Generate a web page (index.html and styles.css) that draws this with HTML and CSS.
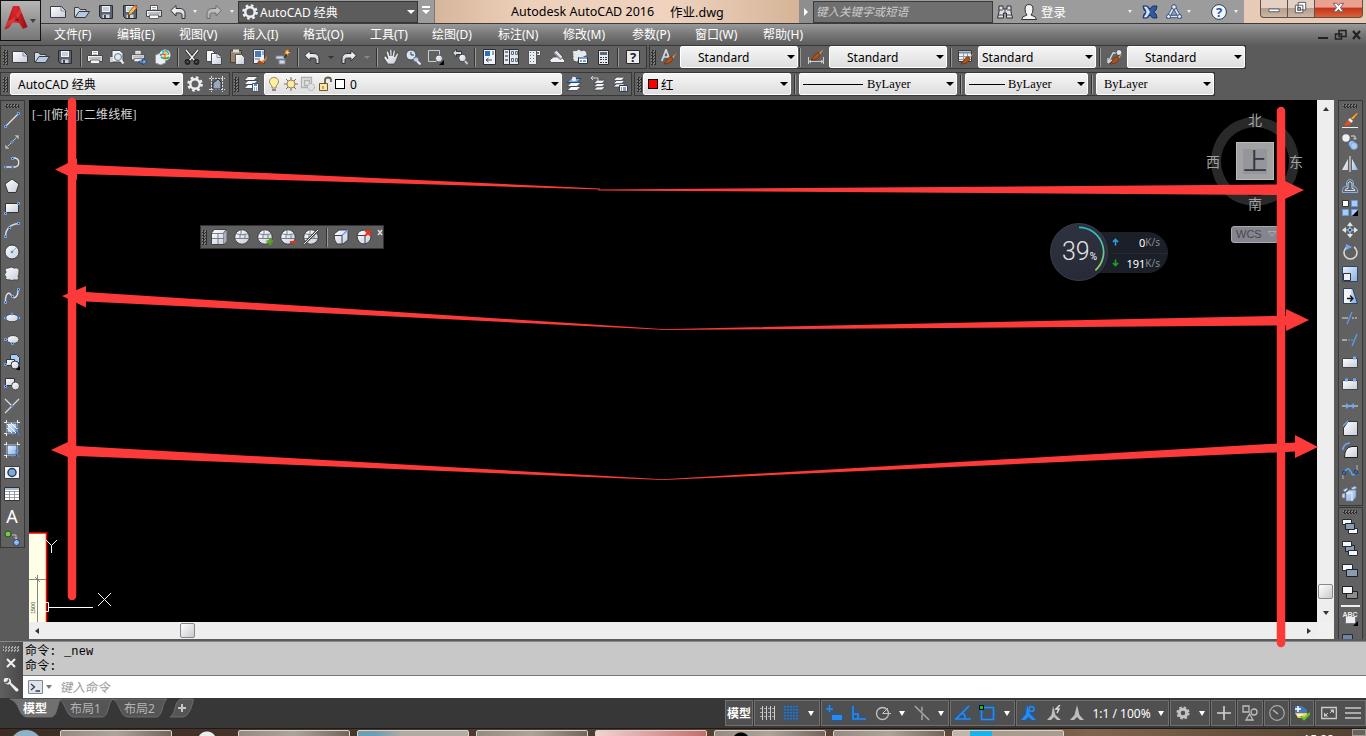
FILE: index.html
```
<!DOCTYPE html>
<html lang="zh-CN">
<head>
  <meta charset="UTF-8">
  <title>Autodesk AutoCAD 2016 - 作业.dwg</title>
  <link rel="stylesheet" href="styles.css">
</head>
<body>
  <!-- Icon set -->
  <svg class="defs" width="0" height="0">
    <defs>
      <linearGradient id="lg" x1="0" y1="0" x2="1" y2="1"><stop offset="0" stop-color="#fff"/><stop offset="1" stop-color="#c6ccd9"/></linearGradient>
      <linearGradient id="bl" x1="0" y1="0" x2="1" y2="1"><stop offset="0" stop-color="#eaf3ff"/><stop offset="1" stop-color="#87aee0"/></linearGradient>
      <linearGradient id="rd" x1="0" y1="0" x2="1" y2="0"><stop offset="0" stop-color="#a81519"/><stop offset=".5" stop-color="#dc2529"/><stop offset="1" stop-color="#8c0e12"/></linearGradient>
    </defs>
    <symbol id="new" viewBox="0 0 16 16"><path d="M.5 2.500h11l4 4v7H.5z" fill="url(#lg)" stroke="#3a3d44"/><path d="M11 3v4h4" fill="#d0d5de" stroke="#8b909a"/></symbol>
    <symbol id="open" viewBox="0 0 16 16"><path d="M.5 13V3.500h4l1.500 2h6V8" fill="#d4dae4" stroke="#3a3d44"/><path d="M1 13.500 5 7.500h10.500l-4 6z" fill="#b9c9dd" stroke="#333a45"/></symbol>
    <symbol id="save" viewBox="0 0 16 16"><path d="M1.500 1.500h13v13h-11l-2-2z" fill="#5b6270" stroke="#292c33"/><path d="M4 2h8v6H4z" fill="#eef1f5"/><path d="M5 4h6M5 6h6" stroke="#a3acb8"/><path d="M4.500 10.500h7V14h-7z" fill="#cfd5df"/><path d="M6 11h2v3H6z" fill="#444a55"/></symbol>
    <symbol id="saveas" viewBox="0 0 16 16"><use href="#save"/><path d="m6 11 1-3 6-7 2.500 2-6 7z" fill="#f3bd50" stroke="#5d4117" stroke-width=".7"/><path d="m13 1 2.500 2-1.200 1.400-2.500-2z" fill="#e86848"/></symbol>
    <symbol id="print" viewBox="0 0 16 16"><path d="M4.500 7V1.500h7V7" fill="#fff" stroke="#555"/><path d="M6 3.500h4M6 5.500h4" stroke="#aaa"/><path d="M.5 6.500h15v6H.5z" fill="url(#lg)" stroke="#444"/><path d="M3.500 11h9v3.500h-9z" fill="#f7f7f7" stroke="#666"/><path d="M2 9h12" stroke="#8c95a4"/></symbol>
    <symbol id="preview" viewBox="0 0 16 16"><path d="M3 13V1.500h8l3 3V13z" fill="#f1f3f6" stroke="#3e424a"/><path d="M1 8h3v5H1z" fill="#cdd2da"/><circle cx="9" cy="8" r="3.500" fill="#dce8f5" stroke="#68717e"/><path d="m11.500 11 3 3.500" stroke="#eee" stroke-width="2"/></symbol>
    <symbol id="plot" viewBox="0 0 16 16"><use href="#print" width="14" height="14"/><path d="M8 12h4V9l4 4-4 3v-2H8z" fill="#69a2ec" stroke="#1c3157" stroke-width=".7"/></symbol>
    <symbol id="globe" viewBox="0 0 16 16"><path d="m.5 6 5-2 5 2v8l-5 2-5-2z" fill="#e9edf4" stroke="#8c929b"/><circle cx="10" cy="6" r="5.500" fill="#d9f1fa"/><path d="M7 1.500c3 1 1 4-2 5M11 1l3 4" stroke="#33b3d7" stroke-width="1.600" fill="none"/><path d="M6 8q5 3 8 0" stroke="#43aa4c" stroke-width="2" fill="none"/><path d="M5 5.500h9M10 1v9" stroke="#ef5b2e" stroke-width="1.200"/><path d="m9 3 4 3" stroke="#f7c52e" stroke-width="1.800"/></symbol>
    <symbol id="cut" viewBox="0 0 16 16"><path d="m2 1 9 11M14 1 5 12" stroke="#252525" stroke-width="3"/><path d="m2 1 9 11M14 1 5 12" stroke="#f1f1f1" stroke-width="1.500"/><circle cx="3.500" cy="13" r="2" fill="none" stroke="#222" stroke-width="1.800"/><circle cx="12.500" cy="13" r="2" fill="none" stroke="#222" stroke-width="1.800"/></symbol>
    <symbol id="copy" viewBox="0 0 16 16"><path d="M.5 1.500h6l3 3v8h-9z" fill="#f4f5f7" stroke="#464a50"/><path d="M5.500 4.500h6l4 3.500v7.500h-10z" fill="url(#lg)" stroke="#464a50"/><path d="M11 5v3.500h4" fill="none" stroke="#8a8f98"/></symbol>
    <symbol id="paste" viewBox="0 0 16 16"><path d="M1.500 1.500h11v12h-11z" fill="#97866b" stroke="#463c2f"/><path d="M4 .5h6v3H4z" fill="#ddd"/><path d="M6.500 5.500h6l3 3v7h-9z" fill="url(#lg)" stroke="#555"/></symbol>
    <symbol id="match" viewBox="0 0 16 16"><path d="M1.500.5h11v14h-11z" fill="#edf1f7" stroke="#384254"/><path d="M3 2h6v6H3z" fill="#4c79ae"/><path d="M3 10h5M10 3h2M10 5h2" stroke="#536789"/><path d="m15.500 6-4 5-2 1 1.500 2 3-3z" fill="#e98532"/><path d="m7 11 5 3-3 2-4-2z" fill="#a54c18"/></symbol>
    <symbol id="blockedit" viewBox="0 0 16 16"><path d="M1 7h9v3H1zM4 11h6v4H4z" fill="#d2d9e5" stroke="#7b8798"/><path d="m9 9 6-7" stroke="#3a3d45" stroke-width="2"/><path d="m13 0 .7 2.600L16 4l-2.700.5L13 7l-1.500-2.200L9 5l1.600-2L10 1l2 .8z" fill="#ffd05a" stroke="#b35b22" stroke-width=".6"/></symbol>
    <symbol id="undo" viewBox="0 0 16 16"><path d="M.8 6.500 6 1.500v3h4c3 0 5 2 5 5v5h-3v-3.500C12 9.500 11 9 9.500 9H6v3z" fill="url(#lg)" stroke="#333"/></symbol>
    <symbol id="redo" viewBox="0 0 16 16"><use href="#undo" transform="translate(16 0) scale(-1 1)"/></symbol>
    <symbol id="hand" viewBox="0 0 16 16"><path d="M5 15 1 9l.2-1.500L2.500 7 5 10 3.300 3l1-1 1 .5L7 7 6.800 1l1-.8 1 .8L9 7l1.500-5.500 1-.5.8.8L11.500 8 14 4l1.300.2.200 1L13 12l-2 3z" fill="url(#lg)" stroke="#333" stroke-width=".6"/></symbol>
    <symbol id="zoom" viewBox="0 0 16 16"><circle cx="6" cy="6" r="5" fill="#dce3ec" stroke="#424852"/><path d="M6 3v3h3" stroke="#283955" fill="none"/><circle cx="11" cy="10.500" r="2.500" fill="#bdd5f0" stroke="#64748c"/><path d="m12 12 3.500 3.500" stroke="#eee" stroke-width="2"/></symbol>
    <symbol id="zoomwin" viewBox="0 0 16 16"><path d="M.5 1.500h11v11H.5z" fill="none" stroke="#c8ccd3"/><circle cx="11" cy="9.500" r="3.500" fill="url(#lg)" stroke="#545b66"/><path d="M16 11v5h-5z"/></symbol>
    <symbol id="zoomprev" viewBox="0 0 16 16"><path d="m.5 4 4-4v2.500h5v3h-5V8z" fill="#d3d9e2" stroke="#333"/><circle cx="10.500" cy="9" r="3.800" fill="url(#lg)" stroke="#3a414e"/><path d="m13 12 2.500 3" stroke="#bfc5cf" stroke-width="2"/></symbol>
    <symbol id="props" viewBox="0 0 16 16"><path d="M2.500.5h12v15h-12z" fill="#f0f3f8" stroke="#292c32"/><path d="M4 2h5v5H4z" fill="#2f6fb9"/><path d="m7.500 9-2.500 2 2.500 2M5 11h6M11 3h2M11 5h2" stroke="#3b4c69" fill="none"/></symbol>
    <symbol id="dc" viewBox="0 0 16 16"><path d="M.5.500h15v15H.5z" fill="#e6e9ee" stroke="#333"/><path d="M6.500 1v14" stroke="#333"/><path d="M2 3h3M2 7h3M2 11h3" stroke="#50647d" stroke-width="1.500"/><path d="M8.500 2.500h2v3h-2zm4 0h2v3h-2zM8.500 9.500h2v3h-2zm4 0h2v3h-2z" fill="#dfe6ef" stroke="#5a6b81"/></symbol>
    <symbol id="palette" viewBox="0 0 16 16"><path d="M2.500 1.500h8v14h-8zM10.500 1.500h4v5h-4" fill="#e9ecef" stroke="#555"/><path d="M4 3h1v1H4zm3 0h1v1H7zM4 6h1v1H4zm3 0h1v1H7zM4 9h1v1H4zm3 0h1v1H7zm-3 3h1v1H4zm3 0h1v1H7zM11 3h2v2h-2z" fill="#68727f"/></symbol>
    <symbol id="sheet" viewBox="0 0 16 16"><path d="m.5 11 4-3 8-.5 3 4v2H2z" fill="#eef0f3" stroke="#555"/><path d="m4.500 4 3-3 6.500 7-3 2.500z" fill="#dfe4ea" stroke="#555"/><path d="m6 4 5 5" stroke="#8c95a1"/></symbol>
    <symbol id="markup" viewBox="0 0 16 16"><path d="M1 5q-2-4 3-3 3-3 5 0 5-2 6 3-1 3-3 2v4q-3 3-6 1-5 2-5-3z" fill="#e5e8ed" stroke="#555" stroke-dasharray="2 1"/><path d="M6.500 8.500h9v6h-9z" fill="#fff" stroke="#24364e"/><path d="M7 9h8" stroke="#73a2d6" stroke-width="2"/><path d="M8 12h2m1 0h3" stroke="#234"/></symbol>
    <symbol id="calc" viewBox="0 0 16 16"><path d="M3.500 1.500h10v14h-10z" fill="#e7e9ee" stroke="#2c2c2c"/><path d="M5 3h7v3H5z" fill="#566b78"/><path d="M5 8h2v1H5zm3 0h1v1H8zm2 0h2v1h-2zM5 10h2v1H5zm3 0h1v1H8zm2 0h2v1h-2zM5 13h2v1H5zm3 0h1v1H8zm2 0h2v1h-2z" fill="#333"/></symbol>
    <symbol id="brush" viewBox="0 0 16 16"><path d="m15.500 4-4 4-2 .5 2 2z" fill="#f7a63c"/><path d="M6 11q2-4 5-3 2 3-1 5-2 2-7 2z" fill="#aa531b" stroke="#63280d" stroke-width=".7"/></symbol>
    <symbol id="tstyle" viewBox="0 0 16 16"><path d="M.8 12 5 .8 9.200 12M2.500 8h5" stroke="#d4d8df" stroke-width="1.700" fill="none"/><use href="#brush"/></symbol>
    <symbol id="dstyle" viewBox="0 0 16 16"><path d="M.5 8v7m15-7v7M1 12.500h14M3 11l-2 1.500L3 14m10-3 2 1.500-2 1.500" stroke="#ccc" fill="none"/><use href="#brush" y="-4"/></symbol>
    <symbol id="tbstyle" viewBox="0 0 16 16"><path d="M.5 1.500h13v11H.5z" fill="#eef0f4" stroke="#393939"/><path d="M1 3.500h12" stroke="#798aa1" stroke-width="2"/><path d="M1 7.500h12M1 10.500h12M5.500 4v8M9.500 4v8" stroke="#9299a4"/><use href="#brush"/></symbol>
    <symbol id="mstyle" viewBox="0 0 16 16"><path d="M1 14 6 4h4M1 14V9m0 5 4-3" stroke="#d5d9df" stroke-width="1.300" fill="none"/><circle cx="12" cy="3.500" r="3" fill="#dbe3ed" stroke="#444"/><use href="#brush"/></symbol>
    <symbol id="gear" viewBox="0 0 16 16"><circle cx="8" cy="8" r="6.500" fill="none" stroke="#eceff5" stroke-width="2.600" stroke-dasharray="2.600 2.505"/><circle cx="8" cy="8" r="4.700" fill="none" stroke="#eceff5" stroke-width="2.400"/></symbol>
    <symbol id="wsset" viewBox="0 0 16 16"><path d="M0 2.500h16M0 13.500h16M2.500 0v16M13.500 0v16" stroke="#ddd" stroke-dasharray="2 1"/><path d="M4 13V7l5-4 3 3v7z" fill="#9aa7b9" stroke="#252c36"/></symbol>
    <symbol id="layers" viewBox="0 0 16 16"><path d="m1 13.500 4-4h10l-4 4zM1 9.500l4-4h10l-4 4zM1 5.500l4-4h10l-4 4z" fill="#f3f5f8" stroke="#363a42" stroke-width=".8"/></symbol>
    <symbol id="laymgr" viewBox="0 0 16 16"><use href="#layers" x="-1" y="-1"/><path d="M8.500 7.500h6v8h-6z" fill="#f7f9fc" stroke="#405473"/><path d="M10 9h3" stroke="#4b8dd0" stroke-width="2"/><path d="M10 12h1m1 0h1m-3 2h1m1 0h1" stroke="#567"/></symbol>
    <symbol id="laycur" viewBox="0 0 16 16"><use href="#layers" y="1"/><path d="m1 6.500 4-4h10l-4 4z" fill="#72a9e8" stroke="#27466c"/><circle cx="8" cy="3" r="2.200" fill="#e6edf7"/></symbol>
    <symbol id="layprev" viewBox="0 0 16 16"><use href="#layers" x="3" y="3" width="13" height="13"/><path d="M1 2h7v3M3 0 1 2l2 2" stroke="#d2d4d8" fill="none"/></symbol>
    <symbol id="laystate" viewBox="0 0 16 16"><use href="#layers" width="14" height="13"/><path d="M7.500 9.500h8v6h-8z" fill="#f3f5f9" stroke="#2c3b50"/><path d="M9 12h1m1 0h3m-5 2h1m1 0h3" stroke="#345"/></symbol>
    <symbol id="bulb" viewBox="0 0 16 16"><path d="M6 10C2 7 3 1.500 8 1.500S14 7 10 10v2H6z" fill="#fff0a1" stroke="#7e7040" stroke-width=".8"/><path d="M6 13h4v2H6z" fill="#888"/></symbol>
    <symbol id="sun" viewBox="0 0 16 16"><path d="M8 1v14M1 8h14M3 3l10 10M3 13 13 3" stroke="#6d643c" stroke-width=".9"/><circle cx="8" cy="8" r="4" fill="#ffeaa0" stroke="#725e35" stroke-width=".7"/></symbol>
    <symbol id="vpfreeze" viewBox="0 0 16 16"><path d="M1.500 1.500h10v10h-10zM4.500 4.500h5v5h-5z" fill="#e4e4e4" stroke="#b0b0b0" stroke-width="1.300"/><circle cx="11" cy="11" r="3.500" fill="#e0e0e0" stroke="#a5a5a5" stroke-dasharray="2 1"/></symbol>
    <symbol id="lock" viewBox="0 0 16 16"><path d="M8 8V4q0-2.500 3-2.500T14 4v2" stroke="#665f4e" fill="none" stroke-width="1.800"/><path d="M2.500 7.500h8v7h-8z" fill="#ffe5a0" stroke="#6f5725"/><path d="M6 10v3" stroke="#665"/></symbol>
    <!-- draw -->
    <symbol id="n" viewBox="0 0 3 3"><path d="M.5.500h2v2h-2z" fill="#26344c" stroke="#70aaff"/></symbol>
    <symbol id="line" viewBox="0 0 16 16"><path d="m2 14 12-12" stroke="#e1e3e6" stroke-width="1.300"/><use href="#n" y="13" width="3" height="3"/><use href="#n" x="13" width="3" height="3"/></symbol>
    <symbol id="xline" viewBox="0 0 16 16"><path d="m2 14 12-12" stroke="#c4c5c8"/><path d="M10 1h5v5zM1 10v5h5z" fill="#b8bbc0" stroke="#555" stroke-width=".5"/><use href="#n" x="6.500" y="6.500" width="3" height="3"/></symbol>
    <symbol id="pline" viewBox="0 0 16 16"><path d="M1 11h10c5-1 5-8 0-9H8" stroke="#e1e2e5" stroke-width="1.300" fill="none"/><use href="#n" y="9.500" width="3" height="3"/><use href="#n" x="7" y="9.500" width="3" height="3"/><use href="#n" x="7" y="1" width="3" height="3"/></symbol>
    <symbol id="polygon" viewBox="0 0 16 16"><path d="m8 1 7 5-3 8.500H4L1 6z" fill="url(#lg)" stroke="#343434"/></symbol>
    <symbol id="rect" viewBox="0 0 16 16"><path d="M1.500 3.500h13v9h-13z" fill="url(#lg)" stroke="#313131"/><use href="#n" y="12" width="3" height="3"/><use href="#n" x="13" y="2" width="3" height="3"/></symbol>
    <symbol id="arc" viewBox="0 0 16 16"><path d="M1.500 14Q2 3 14.500 1.500" stroke="#ddd" stroke-width="1.400" fill="none"/><use href="#n" y="13" width="3" height="3"/><use href="#n" x="4" y="4" width="3" height="3"/><use href="#n" x="13" width="3" height="3"/></symbol>
    <symbol id="circle" viewBox="0 0 16 16"><circle cx="8" cy="8" r="7" fill="url(#lg)" stroke="#353535"/><path d="m8 8 5-5" stroke="#7aaef1"/><use href="#n" x="6.500" y="6.500" width="3" height="3"/></symbol>
    <symbol id="cloud" viewBox="0 0 16 16"><path d="M2 6Q-.5 2 4 2q4-2 6 0 6-1 5 4 0 3-1 4 3 5-4 4-2 1-4 0-6 0-4-3-3-2 0-5z" fill="url(#lg)" stroke="#424242"/></symbol>
    <symbol id="spline" viewBox="0 0 16 16"><path d="M1.500 14C1 6 5 3 7 7c2 5 7 3 7-5" stroke="#e1e1e1" stroke-width="1.400" fill="none"/><use href="#n" y="13" width="3" height="3"/><use href="#n" x="7" y="7" width="3" height="3"/><use href="#n" x="13" width="3" height="3"/></symbol>
    <symbol id="ellipse" viewBox="0 0 16 16"><ellipse cx="8" cy="8" rx="6.500" ry="3.800" fill="url(#lg)" stroke="#444"/><use href="#n" y="6.500" width="3" height="3"/><use href="#n" x="13" y="6.500" width="3" height="3"/><use href="#n" x="6.500" y="2.500" width="3" height="3"/></symbol>
    <symbol id="earc" viewBox="0 0 16 16"><ellipse cx="9" cy="7.500" rx="6" ry="4" fill="url(#lg)" stroke="#444"/><use href="#n" y="6" width="3" height="3"/><use href="#n" x="7" y="10" width="3" height="3"/></symbol>
    <symbol id="insert" viewBox="0 0 16 16"><path d="M6.500.5h6l3 3v7h-9z" fill="#a8cff6" stroke="#2c3e56"/><path d="M2.500 5.500h8v6h-8z" fill="url(#lg)" stroke="#333"/><circle cx="11" cy="11" r="4" fill="url(#lg)" stroke="#343434"/><use href="#n" y="9" width="3" height="3"/><path d="M16 12v4h-4z"/></symbol>
    <symbol id="block" viewBox="0 0 16 16"><path d="M1.500 2.500h9v7h-9z" fill="url(#lg)" stroke="#333"/><circle cx="11.500" cy="10" r="4" fill="url(#lg)" stroke="#444"/><use href="#n" y="9" width="3" height="3"/></symbol>
    <symbol id="point" viewBox="0 0 16 16"><path d="m1 1 7 7m7-7L1 15" stroke="#dedede" stroke-width="1.200"/><use href="#n" x="6.500" y="6.500" width="3" height="3"/></symbol>
    <symbol id="region" viewBox="0 0 16 16"><path d="M0 2.500h16M0 13.500h12M2.500 0v16M13.500 0v12" stroke="#eee"/><path d="M3 3h10v10H3z" fill="url(#bl)" stroke="#263a59"/><path d="m8 15 7-7m-4 0 4 7" stroke="#4f93eb"/></symbol>
    <symbol id="hatch" viewBox="0 0 16 16"><use href="#region"/><path d="m3 8 5 5M3 4l9 9M7 3l6 6" stroke="#fff"/></symbol>
    <symbol id="wipe" viewBox="0 0 16 16"><path d="M.5 2.500h15v12H.5z" fill="#f0f2f6" stroke="#3b3e45"/><circle cx="8" cy="8.500" r="4" fill="#83a9d5" stroke="#29405f" stroke-width="1.500"/></symbol>
    <symbol id="table" viewBox="0 0 16 16"><path d="M.5 1.500h15v13H.5z" fill="#fff" stroke="#333"/><path d="M1 3h14" stroke="#abb9cf" stroke-width="2"/><path d="M1 5.500h14M1 8.500h14M1 11.500h14M5.500 5v9M10.500 5v9" stroke="#858a94" stroke-width=".8"/></symbol>
    <symbol id="addsel" viewBox="0 0 16 16"><circle cx="4" cy="4" r="3" fill="#79c64c" stroke="#214f20"/><circle cx="12.500" cy="12.500" r="3" fill="#8dbcf0" stroke="#20416c"/><path d="M8 5h4v4m-1.500-1.500L12 9l1.500-1.500" stroke="#ddd" fill="none" stroke-width=".8"/></symbol>
    <!-- modify -->
    <symbol id="erase" viewBox="0 0 16 16"><path d="M0 15.500h16" stroke="#eee"/><path d="m15.500 0-7 6 2.500 2 5-6z" fill="#ee9f32" stroke="#333" stroke-width=".4"/><path d="m8 6 3 3-2 2-3-3z" fill="#eee"/><path d="m6 8 3 3q-1 3-6 3-2-1 3-6z" fill="#db5120"/></symbol>
    <symbol id="mcopy" viewBox="0 0 16 16"><circle cx="4" cy="4" r="3.700" fill="#edf0f5"/><circle cx="10" cy="10" r="3.500" fill="#a8cbf4" stroke="#3c5578" stroke-width=".7"/><circle cx="12" cy="12" r="3.500" fill="#a8cbf4" stroke="#6d95c9" stroke-width=".7"/><path d="M9 2h4v3m-1.500-1L13 5.500 14.500 4" stroke="#ddd" fill="none"/></symbol>
    <symbol id="mirror" viewBox="0 0 16 16"><path d="M8 0v16" stroke="#f2f2f2"/><path d="M6 3v11H0z" fill="url(#lg)"/><path d="M10 3v11h6z" fill="url(#bl)"/></symbol>
    <symbol id="offset" viewBox="0 0 16 16"><path d="M.5 14.500h15v-3q-1-3-4-3V5Q11 1.500 8 1.500T4.500 5v3.500q-4 0-4 3z" fill="none" stroke="#82afe9"/><path d="M3 12.500h10q0-2-3-2V5Q8 2 6 5v5.500q-3 0-3 2z" fill="none" stroke="#c9ddfa"/></symbol>
    <symbol id="array" viewBox="0 0 16 16"><path d="M.5.500h6v6h-6z" fill="#fff" stroke="#333"/><path d="M9.500.500h6v6h-6zM.5 9.500h6v6h-6zM9.500 9.500h6v6h-6z" fill="#a8cbf7" stroke="#629ade"/><path d="M16 10v6h-6z"/></symbol>
    <symbol id="move" viewBox="0 0 16 16"><path d="M8 0 5 4h6zM8 16l-3-4h6zM0 8l4-3v6zM16 8l-4-3v6z" fill="#e5e7eb"/><path d="M8 3v3m0 4v3M3 8h3m4 0h3" stroke="#ddd"/><path d="M6.500 6.500h3v3h-3z" fill="#3b4e69" stroke="#76adf6"/></symbol>
    <symbol id="rotate" viewBox="0 0 16 16"><path d="M5 3a6.500 6.500 0 1 0 7 0" fill="none" stroke="#d9dade" stroke-width="1.500"/><path d="m4 0 6 3-6 3z" fill="#72a9f4"/></symbol>
    <symbol id="scale" viewBox="0 0 16 16"><path d="M.5.500h15v15H.5z" fill="url(#bl)" stroke="#29476d"/><path d="M1.500 7.500h7v7h-7z" fill="#eef0f3" stroke="#333"/></symbol>
    <symbol id="stretch" viewBox="0 0 16 16"><path d="M1.500.500h9l5 15h-14z" fill="url(#bl)" stroke="#264668"/><path d="M2 1h7v14H2z" fill="#f3f4f7"/><path d="M5 10.500h6M8 7.500l3 3-3 3" stroke="#111" stroke-width="1.300" fill="none"/></symbol>
    <symbol id="trim" viewBox="0 0 16 16"><path d="M0 8h6" stroke="#ddd"/><path d="M10 8h6" stroke="#dedede" stroke-dasharray="2 1"/><path d="m5 14 5-12" stroke="#5b9be9" stroke-width="1.400"/></symbol>
    <symbol id="extend" viewBox="0 0 16 16"><path d="M0 8h5" stroke="#eee"/><path d="M6 8h6" stroke="#5b9be9" stroke-dasharray="2 1"/><path d="m10 14 5-12" stroke="#5b9be9" stroke-width="1.400"/></symbol>
    <symbol id="breakpt" viewBox="0 0 16 16"><path d="M.5 4.500h15v9H.5z" fill="url(#lg)" stroke="#444"/><path d="M11 2.500h3v3h-3z" fill="#71adf7"/></symbol>
    <symbol id="break" viewBox="0 0 16 16"><use href="#breakpt"/><path d="M3 2.500h3v3H3z" fill="#71adf7"/></symbol>
    <symbol id="join" viewBox="0 0 16 16"><path d="M0 8h16" stroke="#e5e5e5"/><path d="m4 5 4 3-4 3zM12 5 8 8l4 3z" fill="#6ba8f4"/></symbol>
    <symbol id="chamfer" viewBox="0 0 16 16"><path d="M6 1.500h9.500v14h-14V8z" fill="url(#lg)" stroke="#333"/><path d="m1 6 5-5" stroke="#6ca8f1" stroke-width="1.500"/></symbol>
    <symbol id="fillet" viewBox="0 0 16 16"><path d="M15.500 4.500v11h-13Q2.500 5 10 4.500z" fill="url(#lg)" stroke="#202020"/><path d="M.5 8Q2 1 8 1" fill="none" stroke="#6ca8f1" stroke-width="1.500"/></symbol>
    <symbol id="blend" viewBox="0 0 16 16"><path d="M1 15V9M15 1v7" stroke="#999" stroke-width="1.500"/><path d="M2 9q4-8 7-1 2 6 5 0" fill="none" stroke="#57a5ef" stroke-width="1.500"/><circle cx="2" cy="9" r="1.800" fill="#356bd1" stroke="#123" stroke-width=".6"/><circle cx="14" cy="8" r="1.800" fill="#356bd1" stroke="#123" stroke-width=".6"/></symbol>
    <symbol id="explode" viewBox="0 0 16 16"><path d="m4 7 3-3h7v7l-3 4H4zM0 8l3-1v5H0zM9 2l4-2 2 2-4 2zM1 4l4-2 1 1-3 3z" fill="url(#bl)" stroke="#667e9f" stroke-width=".7"/><path d="M4 7h6v8" stroke="#eef6ff" fill="none"/></symbol>
    <!-- draw order -->
    <symbol id="front" viewBox="0 0 16 16"><path d="M.5 1.500h9v5h-9zM6.500 10.500h9v5h-9z" fill="#f5f7fb" stroke="#222b37"/><path d="M3.500 5.500h9v6h-9z" fill="#8d9bad" stroke="#182230"/></symbol>
    <symbol id="back" viewBox="0 0 16 16"><path d="M3.500 5.500h9v6h-9z" fill="#8d9bad" stroke="#182230"/><path d="M.5 1.500h9v5h-9zM6.500 10.500h9v5h-9z" fill="#f5f7fb" stroke="#222b37"/></symbol>
    <symbol id="above" viewBox="0 0 16 16"><path d="M.5 2.500h10v6H.5z" fill="#f5f7fb" stroke="#222b37"/><path d="M4.500 7.500h11v7h-11z" fill="#8d9bad" stroke="#182230"/></symbol>
    <symbol id="under" viewBox="0 0 16 16"><path d="M4.500 7.500h11v7h-11z" fill="#8b8d91" stroke="#222"/><path d="M.5 2.500h10v7H.5z" fill="#f5f7fb" stroke="#202020"/></symbol>
    <!-- smooth mesh -->
    <symbol id="box" viewBox="0 0 16 16"><path d="m.5 4 3-3.500h12l-2.500 3v12H.5z" fill="url(#lg)" stroke="#444"/><path d="m13 4 2.500-3v11L13 15z" fill="#a9afba"/><path d="M1 4.500h12M1 9.500h12M7 4v11" stroke="#777f8c"/></symbol>
    <symbol id="ball" viewBox="0 0 16 16"><circle cx="8" cy="8" r="7.200" fill="url(#lg)" stroke="#333" stroke-width=".8"/><path d="M2 4.800q6 2 12 0M1.200 9.500h13.600M6 5.500v4M11 5.500v4M7 1v4" fill="none" stroke="#6b7380" stroke-width=".9"/></symbol>
    <symbol id="ballplus" viewBox="0 0 16 16"><use href="#ball"/><path d="M13 9v7m-3.500-3.500h7" stroke="#54a51b" stroke-width="2.500"/></symbol>
    <symbol id="ballminus" viewBox="0 0 16 16"><use href="#ball"/><path d="M10 13h6" stroke="#e73415" stroke-width="2"/></symbol>
    <symbol id="ballcut" viewBox="0 0 16 16"><use href="#ball"/><path d="m1 15 14-14" stroke="#444" stroke-width="2.500"/><path d="m1 15 14-14" stroke="#eee"/></symbol>
    <symbol id="crease" viewBox="0 0 16 16"><path d="m1 5 5-4h9v10l-5 4H4q-3-3-3-10z" fill="url(#lg)" stroke="#3a3d43"/><path d="M1 6.500h8v8.500" fill="none" stroke="#374252"/><path d="m9 6.500 6-5.500" stroke="#5f9cec" stroke-width="1.500"/></symbol>
    <symbol id="uncrease" viewBox="0 0 16 16"><path d="M1 7q1-6 8-6 6 0 6 6 0 7-7 8-6 0-7-8z" fill="url(#lg)" stroke="#3a3d43"/><path d="M1.500 6.500H9V15" fill="none" stroke="#374252"/><path d="m9 1 6 6m0-6L9 7" stroke="#e63318" stroke-width="2.200"/></symbol>
  </svg>

  <div class="window">
    <!-- Title bar -->
    <header class="titlebar">
      <div class="quick">
        <svg class="ico"><use href="#new"/></svg>
        <svg class="ico"><use href="#open"/></svg>
        <svg class="ico"><use href="#save"/></svg>
        <svg class="ico"><use href="#saveas"/></svg>
        <svg class="ico"><use href="#print"/></svg>
        <svg class="ico"><use href="#undo"/></svg>
        <i class="dd light"></i>
        <svg class="ico dim"><use href="#redo"/></svg>
        <i class="dd light"></i>
      </div>
      <div class="workspace"><svg class="ico"><use href="#gear"/></svg><span>AutoCAD 经典</span><i class="dd white"></i></div>
      <div class="more"><i class="dd white"></i></div>
      <div class="caption"><span>Autodesk AutoCAD 2016</span><span>作业.dwg</span></div>
      <div class="expand"><i></i></div>
      <div class="search"><span>键入关键字或短语</span></div>
      <div class="account">
        <svg class="ico" viewBox="0 0 16 16"><path d="M2 2h4v3h4V2h4v6l1.500 6h-6V9h-3v5h-6L2 8z" fill="#dfe2e8" stroke="#2c2f36"/><path d="M2 6h4m4 0h4M1 11h5m4 0h5M8 5v4" stroke="#444"/></svg>
        <svg class="ico" viewBox="0 0 16 16"><path d="M.5 15.500q0-3 5.500-4.500-2-2-2-6 0-4.500 4-4.500T12 5q0 4-2 6 5.500 1.500 5.500 4.500z" fill="#f3f4f6" stroke="#2f3136"/></svg>
        <span>登录</span>
        <i class="dd light"></i>
        <svg class="ico" viewBox="0 0 16 16"><path d="M1 2h4.500L8 5l2.500-3H15l-1 4-2.500 2 2.500 2 1 4h-4.500L8 11l-2.500 3H1l1-4 2.500-2L2 6z" fill="#2f58a5" stroke="#1c3166"/><path d="M1.800 2.800h3L8 8l-3.200 5.200h-3Q4.500 10 4.500 8T1.800 2.800z" fill="#dbe5f5"/></svg>
        <svg class="ico" viewBox="0 0 16 16"><path d="M8 3 2.500 12.500h11z" fill="none" stroke="#314d7e" stroke-width="3.400"/><path d="M8 3 2.500 12.500h11z" fill="none" stroke="#dce6f6" stroke-width="1.700"/><circle cx="8" cy="3" r="2.300" fill="#e7edf7" stroke="#314d7e"/><circle cx="2.500" cy="12.500" r="2" fill="#e7edf7" stroke="#314d7e"/><circle cx="13.500" cy="12.500" r="2" fill="#e7edf7" stroke="#314d7e"/></svg>
        <i class="dd light"></i>
        <svg class="ico" viewBox="0 0 16 16"><circle cx="8" cy="8" r="7.400" fill="#f3f6fb" stroke="#303c50"/><text x="8" y="12.500" text-anchor="middle" class="t-q">?</text></svg>
        <i class="dd light"></i>
      </div>
      <div class="winbtns">
        <b><svg viewBox="0 0 28 18"><path d="M8.500 9.500h11v3h-11z" fill="#fff" stroke="#4e5665"/></svg></b>
        <b><svg viewBox="0 0 26 18"><path d="M10 2.500h8v8h-8zM7 5.500h8v8H7z" fill="#fff" stroke="#4e5665"/><path d="M9.500 8h3v3h-3z" fill="#bba594" stroke="#4e5665"/></svg></b>
        <b class="close"><svg viewBox="0 0 48 18"><path d="M18.500 3.500H22L24 6l2-2.500h3.500L26 8l3.500 4.500H26L24 10l-2 2.500h-3.500L22 8z" fill="#fff" stroke="#64596a"/></svg></b>
      </div>
    </header>
    <div class="appbtn">
      <svg viewBox="0 0 24 26"><path d="M9 1h6l8.500 21-4.500 2-4-6-6-.5L4.500 23 .5 24.500z" fill="url(#rd)"/><path d="m9.500 15.500 2.500-6 3 6.500z" fill="#7d0f13"/><path d="M4 16Q12 13 16 4l1.500 3Q12 18 1 23z" fill="#f0575a" opacity=".45"/></svg>
      <i class="dd"></i>
    </div>

    <!-- Menu -->
    <nav class="menubar">
      <span>文件(F)</span><span>编辑(E)</span><span>视图(V)</span><span>插入(I)</span><span>格式(O)</span><span>工具(T)</span><span>绘图(D)</span><span>标注(N)</span><span>修改(M)</span><span>参数(P)</span><span>窗口(W)</span><span>帮助(H)</span>
      <svg class="mdi" viewBox="0 0 46 14"><path d="M0 10h10" stroke="#222" stroke-width="2"/><path d="M21 2.500h7v6h-7zM17.500 6h6v5h-6z" fill="#777" stroke="#222" stroke-width="1.500"/><path d="m35 3 7 8m0-8-7 8" stroke="#222" stroke-width="2.200"/></svg>
    </nav>

    <!-- Toolbars -->
    <div class="row">
      <div class="bar standard">
        <i class="grip"></i>
        <svg class="ico"><use href="#new"/></svg>
        <svg class="ico"><use href="#open"/></svg>
        <svg class="ico"><use href="#save"/></svg>
        <i class="sep"></i>
        <svg class="ico"><use href="#print"/></svg>
        <svg class="ico"><use href="#preview"/></svg>
        <svg class="ico"><use href="#plot"/></svg>
        <svg class="ico"><use href="#globe"/></svg>
        <i class="sep"></i>
        <svg class="ico"><use href="#cut"/></svg>
        <svg class="ico"><use href="#copy"/></svg>
        <svg class="ico"><use href="#paste"/></svg>
        <svg class="ico"><use href="#match"/></svg>
        <svg class="ico"><use href="#blockedit"/></svg>
        <i class="sep"></i>
        <svg class="ico"><use href="#undo"/></svg>
        <i class="dd dark"></i>
        <svg class="ico"><use href="#redo"/></svg>
        <i class="dd gray"></i>
        <i class="sep"></i>
        <svg class="ico"><use href="#hand"/></svg>
        <svg class="ico"><use href="#zoom"/></svg>
        <svg class="ico"><use href="#zoomwin"/></svg>
        <svg class="ico"><use href="#zoomprev"/></svg>
        <i class="sep"></i>
        <svg class="ico"><use href="#props"/></svg>
        <svg class="ico"><use href="#dc"/></svg>
        <svg class="ico"><use href="#palette"/></svg>
        <svg class="ico"><use href="#sheet"/></svg>
        <svg class="ico"><use href="#markup"/></svg>
        <svg class="ico"><use href="#calc"/></svg>
        <i class="sep"></i>
        <svg class="ico" viewBox="0 0 16 16"><path d="M1.500 1.500h13v13h-13z" fill="#e9ebef" stroke="#2a2a2a"/><text x="8" y="13" text-anchor="middle" class="t-help">?</text></svg>
      </div>
      <div class="bar styles">
        <i class="grip"></i>
        <svg class="ico"><use href="#tstyle"/></svg>
        <div class="combo in18"><span>Standard</span><i class="dd"></i></div>
        <i class="sep"></i>
        <svg class="ico"><use href="#dstyle"/></svg>
        <div class="combo in18"><span>Standard</span><i class="dd"></i></div>
        <i class="sep"></i>
        <svg class="ico"><use href="#tbstyle"/></svg>
        <div class="combo in4"><span>Standard</span><i class="dd"></i></div>
        <i class="sep"></i>
        <svg class="ico"><use href="#mstyle"/></svg>
        <div class="combo in18"><span>Standard</span><i class="dd"></i></div>
      </div>
    </div>
    <div class="row second">
      <div class="bar spaces">
        <i class="grip"></i>
        <div class="combo in8"><span>AutoCAD 经典</span><i class="dd"></i></div>
        <svg class="ico"><use href="#gear"/></svg>
        <svg class="ico"><use href="#wsset"/></svg>
      </div>
      <div class="bar layerbar">
        <i class="grip"></i>
        <svg class="ico"><use href="#laymgr"/></svg>
        <div class="combo layer">
          <svg class="ico"><use href="#bulb"/></svg>
          <svg class="ico"><use href="#sun"/></svg>
          <svg class="ico"><use href="#vpfreeze"/></svg>
          <svg class="ico"><use href="#lock"/></svg>
          <i class="swatch"></i><span>0</span><i class="dd"></i>
        </div>
        <svg class="ico"><use href="#laycur"/></svg>
        <svg class="ico"><use href="#layprev"/></svg>
        <svg class="ico"><use href="#laystate"/></svg>
      </div>
      <div class="bar propbar">
        <i class="grip"></i>
        <div class="combo"><i class="swatch red"></i><span class="song">红</span><i class="dd"></i></div>
        <i class="sep"></i>
        <div class="combo ruled"><i class="rule long"></i><span class="song">ByLayer</span><i class="dd"></i></div>
        <i class="sep"></i>
        <div class="combo ruled"><i class="rule"></i><span class="song">ByLayer</span><i class="dd"></i></div>
        <i class="sep"></i>
        <div class="combo in8"><span class="song">ByLayer</span><i class="dd"></i></div>
      </div>
    </div>

    <main class="work">
      <div class="side left">
        <i class="hgrip"></i>
        <svg class="ico"><use href="#line"/></svg>
        <svg class="ico"><use href="#xline"/></svg>
        <svg class="ico"><use href="#pline"/></svg>
        <svg class="ico"><use href="#polygon"/></svg>
        <svg class="ico"><use href="#rect"/></svg>
        <svg class="ico"><use href="#arc"/></svg>
        <svg class="ico"><use href="#circle"/></svg>
        <svg class="ico"><use href="#cloud"/></svg>
        <svg class="ico"><use href="#spline"/></svg>
        <svg class="ico"><use href="#ellipse"/></svg>
        <svg class="ico"><use href="#earc"/></svg>
        <svg class="ico"><use href="#insert"/></svg>
        <svg class="ico"><use href="#block"/></svg>
        <svg class="ico"><use href="#point"/></svg>
        <svg class="ico"><use href="#hatch"/></svg>
        <svg class="ico"><use href="#region"/></svg>
        <svg class="ico"><use href="#wipe"/></svg>
        <svg class="ico"><use href="#table"/></svg>
        <svg class="ico" viewBox="0 0 16 16"><text x="8" y="14.500" text-anchor="middle" class="t-a">A</text></svg>
        <svg class="ico"><use href="#addsel"/></svg>
      </div>

      <div class="view">
        <div class="canvas">
          <span class="vplabel">[−][俯视][二维线框]</span>
          <!-- Sheet corner and UCS icon -->
          <svg class="ucs" viewBox="0 0 110 92">
            <path d="M0 3h17v89H0z" fill="#ffffe8"/>
            <path d="M0 3h17.500v89" fill="none" stroke="#f00" stroke-width="1.500"/>
            <path d="M0 49.500h17M8.500 45v47M6 47l5 5" stroke="#666" stroke-width=".8" fill="none"/>
            <text x="-84" y="5.500" transform="rotate(-90)" class="t-dim">1500</text>
            <path d="M11.500 72.500h8v9h-8zM19 77.500h45M17 10l5.500 5.500L28 10m-5.500 5.500V23M69 63l13 13m0-13L69 76" stroke="#fff" fill="none"/>
          </svg>
          <!-- Smooth mesh toolbar -->
          <div class="mesh">
            <i class="grip"></i>
            <svg class="ico"><use href="#box"/></svg>
            <svg class="ico"><use href="#ball"/></svg>
            <svg class="ico"><use href="#ballplus"/></svg>
            <svg class="ico"><use href="#ballminus"/></svg>
            <svg class="ico"><use href="#ballcut"/></svg>
            <i class="sep"></i>
            <svg class="ico"><use href="#crease"/></svg>
            <svg class="ico"><use href="#uncrease"/></svg>
            <svg class="x" viewBox="0 0 6 7"><path d="m1 1 4 5m0-5L1 6" stroke="#ddd" stroke-width="1.500"/></svg>
          </div>
          <!-- View cube -->
          <div class="cube">
            <i class="ring"></i>
            <span class="n">北</span><span class="w">西</span><span class="e">东</span><span class="s">南</span>
            <div class="face"><span>上</span></div>
          </div>
          <div class="wcs">WCS<svg viewBox="0 0 10 8"><path d="M1 1.500h8L5 6z" fill="none" stroke="#aaa"/></svg></div>
          <!-- Speed meter -->
          <div class="meter">
            <div class="speeds">
              <p><svg viewBox="0 0 8 8"><path d="M4 8V1M1 4l3-3 3 3" fill="none" stroke="#2b9fe6" stroke-width="1.800"/></svg><b>0</b>K/s</p>
              <p><svg viewBox="0 0 8 8"><path d="M4 0v7M1 4l3 3 3-3" fill="none" stroke="#16a722" stroke-width="1.800"/></svg><b>191</b>K/s</p>
            </div>
            <div class="dial">
              <svg viewBox="0 0 58 58"><defs><linearGradient id="arcg" x1="0" y1="0" x2="0" y2="1"><stop offset="0" stop-color="#23b9c7"/><stop offset="1" stop-color="#92d360"/></linearGradient></defs><path d="M29 3.500A25.500 25.500 0 0 1 46 48" fill="none" stroke="url(#arcg)" stroke-width="1.800"/></svg>
              <span>39<small>%</small></span>
            </div>
          </div>
        </div>
        <div class="vscroll"><i class="up"></i><i class="thumb"></i><i class="down"></i></div>
        <div class="hscroll"><i class="lt"></i><i class="thumb"></i><i class="rt"></i></div>
      </div>

      <div class="rightcol">
        <div class="side modify">
          <i class="hgrip"></i>
          <svg class="ico"><use href="#erase"/></svg>
          <svg class="ico"><use href="#mcopy"/></svg>
          <svg class="ico"><use href="#mirror"/></svg>
          <svg class="ico"><use href="#offset"/></svg>
          <svg class="ico"><use href="#array"/></svg>
          <svg class="ico"><use href="#move"/></svg>
          <svg class="ico"><use href="#rotate"/></svg>
          <svg class="ico"><use href="#scale"/></svg>
          <svg class="ico"><use href="#stretch"/></svg>
          <svg class="ico"><use href="#trim"/></svg>
          <svg class="ico"><use href="#extend"/></svg>
          <svg class="ico"><use href="#breakpt"/></svg>
          <svg class="ico"><use href="#break"/></svg>
          <svg class="ico"><use href="#join"/></svg>
          <svg class="ico"><use href="#chamfer"/></svg>
          <svg class="ico"><use href="#fillet"/></svg>
          <svg class="ico"><use href="#blend"/></svg>
          <svg class="ico"><use href="#explode"/></svg>
        </div>
        <div class="side order">
          <i class="hgrip"></i>
          <svg class="ico"><use href="#front"/></svg>
          <svg class="ico"><use href="#back"/></svg>
          <svg class="ico"><use href="#above"/></svg>
          <svg class="ico"><use href="#under"/></svg>
          <i class="hsep"></i>
          <svg class="ico" viewBox="0 0 16 16"><path d="M3.500 6.500h10v7h-10z" fill="#eceef1" stroke="#777"/><text x=".5" y="7" class="t-abc">ABC</text><path d="M16 11v5h-5z"/></svg>
          <svg class="ico" viewBox="0 0 16 16"><path d="M.5 2.500h10v13H.5z" fill="#6d86a5" stroke="#222b37"/></svg>
        </div>
      </div>
    </main>

    <!-- Command line -->
    <section class="command">
      <div class="cmdside">
        <i class="cgrip"></i>
        <svg viewBox="0 0 12 12"><path d="m2 2 8 8m0-8-8 8" stroke="#f2f2f2" stroke-width="2"/></svg>
        <svg class="wrench" viewBox="0 0 16 16"><path d="M5 1 4 4 1 5Q0 2 2 1zM1.500 5.500Q4 8 6 6.500l6 7q3 1 2.500-2L7.500 5.500Q8 2 5 1l1 3-2 2z" fill="#eee"/></svg>
      </div>
      <div class="cmdmain">
        <div class="history"><p>命令: _new</p><p>命令:</p></div>
        <div class="input">
          <svg class="prompt" viewBox="0 0 16 14"><path d="M.5.500h14v13H.5z" fill="#dfe3ea" stroke="#808a99"/><path d="m3 4 3.500 3L3 10M7.500 11H12" fill="none" stroke="#333b48" stroke-width="1.300"/></svg>
          <i class="dd mid"></i><span>键入命令</span>
        </div>
      </div>
    </section>

    <!-- Layout tabs and status bar -->
    <footer class="status">
      <div class="tabs">
        <svg class="tabshape" viewBox="0 0 200 20"><g stroke="#757575" stroke-width=".8"><path d="M158 18q3-1 5-9 2-9 7-9h11q1 0-1 6-3 11-9 12z" fill="#555"/><path d="M101 0h54q-3 2-5 11-2 7-6 7h-28q-5 0-8-8t-7-10z" fill="#555"/><path d="M47 0h54q-3 2-5 11-2 7-6 7H62q-5 0-8-8T47 0z" fill="#555"/><path d="M-2 0h50q-1 3-3 10-2 8-6 8H15q-5 0-8-8T-2 0z" fill="#707070"/></g></svg>
        <span class="on">模型</span><span>布局1</span><span>布局2</span>
        <svg class="plus" viewBox="0 0 10 10"><path d="M5 1v8M1 5h8" stroke="#c4c4c4" stroke-width="2"/></svg>
      </div>
      <div class="tools">
        <div class="cell c-model">模型</div>
        <div class="cell c-grid">
          <svg viewBox="0 0 16 16"><path d="M2.500 1v14M6.500 1v14M10.500 1v14M14.500 1v14" stroke="#ccc"/><path d="M0 3.500h16M0 7.500h16M0 11.500h16" stroke="#aaa" stroke-dasharray="2 2"/></svg>
          <svg class="glow" viewBox="0 0 16 16"><path d="M2 1v14M5 1v14M8 1v14M11 1v14M14 1v14" stroke="#1e7fe8" stroke-width="1.600" stroke-dasharray="1.600 1.400"/></svg>
          <i class="dd white"></i>
        </div>
        <div class="cell c-ortho">
          <svg class="glow" viewBox="0 0 16 16"><path d="M0 4h7M3.500 0v7" stroke="#258cf5" stroke-width="1.500"/><path d="M6 10h10v5H6z" fill="#258cf5"/></svg>
          <svg class="glow" viewBox="0 0 16 16"><path d="M2 1v13h13M2 9h5v5" fill="none" stroke="#258cf5" stroke-width="1.600"/></svg>
          <svg viewBox="0 0 16 16"><circle cx="7.500" cy="8.500" r="6" fill="none" stroke="#c2c2c2" stroke-width="1.300"/><path d="M7.500 8.500H16M7.500 8.500 13 3" stroke="#c2c2c2"/></svg>
          <i class="dd white"></i>
          <svg viewBox="0 0 18 18"><path d="m1 1 16 16M9 2v5m0 4v6" stroke="#aaa" stroke-width="1.600"/></svg>
          <i class="dd white"></i>
        </div>
        <div class="cell c-snap">
          <svg class="glow" viewBox="0 0 16 16"><path d="M1 14 14 1M0 14h16M7 8q4 2 3 6" fill="none" stroke="#258cf5" stroke-width="1.700"/></svg>
          <svg class="glow" viewBox="0 0 16 16"><path d="M2.500 2.500h12v12h-12z" fill="none" stroke="#258cf5" stroke-width="1.600"/><path d="M.5.500h4v4h-4z" fill="#12c41a" stroke="#000"/></svg>
          <i class="dd white"></i>
        </div>
        <div class="cell c-anno">
          <svg class="glow" viewBox="0 0 16 16"><path d="m6 0 3 9 6 6h-4l-3.500-3L4 15H0l5-6z" fill="#258cf5"/><circle cx="10.500" cy="4" r="2.500" fill="#505050" stroke="#258cf5" stroke-width="1.500"/></svg>
          <svg viewBox="0 0 16 16"><path d="m7 1 2.500 9 5.500 5h-4l-3-3-3 3H1l4.500-5z" fill="#bdbdbd"/><path d="m14 0-4 4h3l-2 4" fill="none" stroke="#ddd" stroke-width="1.500"/></svg>
          <svg viewBox="0 0 16 16"><path d="m8 0 2.500 10 4.500 5h-4l-3-3-3 3H1l4.500-5z" fill="#bdbdbd"/></svg>
          <span>1:1 / 100%</span><i class="dd white"></i>
        </div>
        <div class="cell c-gear"><svg viewBox="0 0 16 16"><circle cx="8" cy="8" r="3.800" fill="none" stroke="#c3c3c3" stroke-width="3"/><circle cx="8" cy="8" r="5.600" fill="none" stroke="#c3c3c3" stroke-width="2" stroke-dasharray="2.500 1.900"/></svg><i class="dd white"></i></div>
        <div class="cell c-plus"><svg viewBox="0 0 16 16"><path d="M8 1v14M1 8h14" stroke="#d2d2d2" stroke-width="1.600"/></svg></div>
        <div class="cell c-iso"><svg viewBox="0 0 16 16"><path d="M1 1h6v6H1zM7.500 9l3.500 6H4z" fill="none" stroke="#bdbdbd" stroke-width="1.300"/><circle cx="12" cy="7" r="3" fill="none" stroke="#bdbdbd" stroke-width="1.300"/></svg></div>
        <div class="cell c-perf"><svg viewBox="0 0 16 16"><circle cx="8" cy="8" r="7.300" fill="none" stroke="#aaa" stroke-width="1.200"/><path d="m4 5 5 4" stroke="#bbb" stroke-width="1.500"/></svg></div>
        <div class="cell c-trust"><svg viewBox="0 0 16 16"><path d="M1 1h7l5 4v4H1z" fill="#4478bd"/><path d="M1 8h12v5H4z" fill="#edcf57"/><path d="M1 4h6M4 1v6M3 10h6" stroke="#fff" stroke-width="1.500"/><path d="m7 11 3 3 6-6" fill="none" stroke="#63c32a" stroke-width="2.300"/></svg></div>
        <div class="cell c-full"><svg viewBox="0 0 16 14"><path d="M.7 1.500h14.600v11H.7z" fill="none" stroke="#ccc" stroke-width="1.300"/><path d="M9 3.500h4v4zM3 6.500v4h4z" fill="#ccc"/><path d="m12 4-3 3M4 10l3-3" stroke="#ccc"/></svg><svg viewBox="0 0 16 16"><path d="M0 3h16M0 8h16M0 13h16" stroke="#c8c8c8" stroke-width="1.500"/></svg></div>
      </div>
    </footer>

    <div class="taskbar">
      <i class="start"></i><i class="task"></i><i class="gap"></i><i class="task"></i><i class="task blue"></i><i class="task"></i><i class="task pink"></i><i class="task qq"></i><i class="task"></i><i class="task win"></i>
      <span class="clock">15:28</span><i class="peek"></i>
    </div>

    <!-- Red markup over the whole window -->
    <svg class="markup" viewBox="0 0 1366 736">
      <g fill="#fc3a3a">
        <path d="M72 102v494" stroke="#fc3a3a" stroke-width="8.500" stroke-linecap="round"/>
        <path d="M1281 111v532" stroke="#fc3a3a" stroke-width="8.500" stroke-linecap="round"/>
        <path d="m55 169.500 22-11v6l523 24v.9L77 174v6z"/>
        <path d="m598 189.500 687-5V181l19 9-19 9v-4l-687-4.500z"/>
        <path d="m62 296 24-10v6l576 37v.8L86 301.500v6z"/>
        <path d="m660 329.200 626-13.500V309l23 11-23 11v-5.500L660 330z"/>
        <path d="m51 450 18-8.500 8 4.500 586 33.200v.8L77 456l-2 4z"/>
        <path d="m663 479.200 632-36.700V435l23 12-23 11v-6.500L663 480z"/>
      </g>
    </svg>
  </div>
</body>
</html>
```
FILE: styles.css
```
* { box-sizing: border-box; }

body {
  margin: 0;
  background: #5b5b5b;
  font-family: "Noto Sans", "Noto Sans CJK SC", sans-serif;
  font-size: 12px;
  color: #000;
}

i, b, p { font-style: normal; margin: 0; }
svg { display: block; flex: none; }
.defs { position: absolute; }
.ico { width: 16px; height: 16px; }

.window {
  position: relative;
  width: 1366px;
  height: 736px;
  overflow: hidden;
  display: flex;
  flex-direction: column;
}

/* svg text */
.t-help { font: bold 13px "Noto Sans", sans-serif; fill: #222; }
.t-q { font: bold 13px "Noto Sans", sans-serif; fill: #2459a9; }
.t-a { font: 18px "Noto Sans", sans-serif; fill: #fff; }
.t-abc { font: bold 7px "Liberation Sans", sans-serif; fill: #eee; }
.t-dim { font: 5.500px "Liberation Sans", sans-serif; fill: #333; }

/* small dropdown triangle */
.dd {
  width: 0;
  height: 0;
  border: 4px solid transparent;
  border-top-color: #000;
  border-bottom-width: 0;
  flex: none;
}
.dd.light { border-width: 3px 2.5px 0; border-top-color: #eee; }
.dd.white { border-top-color: #fff; }
.dd.dark { border-width: 3px 3px 0; border-top-color: #333; }
.dd.gray { border-width: 3px 3px 0; border-top-color: #888; }
.dd.mid { border-width: 4px 3px 0; border-top-color: #777; }

/* ===== title bar ===== */
.titlebar {
  height: 24px;
  flex: none;
  display: flex;
  background: #9c9c9c;
  border-bottom: 1px solid #3b3b3b;
}
.quick {
  width: 192px;
  margin-left: 46px;
  display: grid;
  grid-template-columns: 24px 24px 24px 24px 24px 24px 10px 28px 8px;
  justify-items: center;
  align-items: center;
}
.dim { opacity: .45; }
.workspace {
  width: 180px;
  height: 22px;
  margin-top: 1px;
  padding: 0 2px 0 3px;
  border: 1px solid #353535;
  background: #5c5c5c;
  color: #fff;
  display: flex;
  align-items: center;
  gap: 2px;
}
.workspace .dd { margin-left: auto; }
.more { width: 17px; display: grid; place-content: center; border-right: 1px solid #777; }
.more .dd { position: relative; }
.more .dd::before { content: ""; position: absolute; left: -4px; top: -8px; width: 8px; height: 2px; background: #fff; }
.caption {
  width: 364px;
  display: flex;
  gap: 16px;
  padding-left: 76px;
  align-items: center;
  font-size: 12.5px;
  white-space: nowrap;
  background: linear-gradient(90deg, #d6b69b, #edd0ba 25%, #efd3bf 65%, #d5b497);
}
.expand { width: 14px; display: grid; place-content: center; background: #8e8e8e; }
.expand i { border: 4px solid transparent; border-left-color: #fff; border-right-width: 0; }
.search {
  width: 180px;
  height: 22px;
  margin-top: 1px;
  padding-left: 3px;
  background: #6f6f6f;
  border: 1px solid #3b3b3b;
  color: #ccc;
  font-size: 11.5px;
  line-height: 20px;
}
.search span { display: inline-block; transform: skewX(-14deg); }
.account {
  width: 251px;
  display: flex;
  align-items: center;
  padding-left: 4px;
  color: #fff;
}
.account .ico { margin-right: 8px; }
.account span { margin-left: -4px; margin-right: 62px; font-size: 12.5px; }
.account .dd { margin-right: 10px; }
.account .dd:nth-of-type(2) { margin: 0 20px 0 -3px; }
.account .dd:nth-of-type(3) { margin: 0 0 0 -1px; }
.winbtns {
  flex: 1;
  display: flex;
  padding: 0 3px 4px 16px;
  background: #e7cbb6;
}
.winbtns b {
  width: 28px;
  height: 18px;
  border: 1px solid #5f5149;
  border-top: 0;
  background: linear-gradient(#e4d1c4 45%, #b59e8e 50%, #cdb5a4);
  border-radius: 0 0 0 4px;
}
.winbtns b:nth-child(2) { width: 27px; border-radius: 0; border-left: 0; }
.winbtns b.close { width: 48px; border-radius: 0 0 4px 0; border-left: 0; background: linear-gradient(#e9a190 40%, #c5351b 50%, #d96239); }
.winbtns svg { width: 100%; height: 17px; }
.appbtn {
  position: absolute;
  left: 0;
  top: 0;
  width: 41px;
  height: 41px;
  display: flex;
  align-items: center;
  border: 1px solid #111;
  background: linear-gradient(#b6b6b6, #8f8f8f 60%, #777);
}
.appbtn svg { width: 24px; height: 26px; margin: -5px 2px 0 3px; }
.appbtn .dd { border-top-color: #3a3f48; border-width: 4px 3.5px 0; }

/* ===== menu ===== */
.menubar {
  height: 21px;
  flex: none;
  display: grid;
  grid-template-columns: 63px 62px 64px 60px 67px 62px 66px 65px 69px 63px 68px 60px 1fr;
  padding-left: 54px;
  align-items: center;
  color: #fff;
  font-size: 12px;
  line-height: 20px;
  background: linear-gradient(#999, #777 50%, #5c5c5c);
}
.mdi { width: 46px; height: 14px; justify-self: end; margin-right: 2px; }

/* ===== toolbars ===== */
.row { height: 25px; flex: none; display: flex; gap: 2px; align-items: flex-start; }
.row.second { margin-top: 2px; height: 28px; }
.bar {
  height: 24px;
  display: grid;
  align-items: center;
  justify-items: center;
  border: 1px solid #383838;
  background: #616161;
}
.standard { width: 647px; grid-template-columns: 8px 22px 23px 23px 7px 22px 22px 23px 24px 6px 22px 23px 23px 23px 23px 6px 23px 14px 22px 14px 6px 22px 23px 23px 24px 6px 22px 23px 23px 23px 23px 22px 8px 22px; }
.styles { width: 597px; grid-template-columns: 7px 23px 118px 4px 27px 118px 7px 24px 118px 7px 24px 118px; }
.spaces { width: 230px; grid-template-columns: 9px 173px 23px 22px; }
.layerbar { width: 400px; grid-template-columns: 7px 24px 298px 24px 23px 22px; }
.propbar { width: 581px; grid-template-columns: 8px 148px 8px 158px 8px 123px 8px 118px; }
.standard .ico, .side .ico { position: relative; left: -.5px; }
.grip {
  width: 5px;
  height: 15px;
  background: repeating-conic-gradient(#2d2d2d 0 25%, #7c7c7c 0 50%) 0 0 / 3px 3px;
}
.sep { width: 2px; height: 19px; border-left: 1px solid #333; background: #999; }
.combo {
  justify-self: stretch;
  height: 22px;
  display: flex;
  align-items: center;
  padding: 0 2px 0 4px;
  border: 1px solid #fff;
  border-radius: 2px;
  background: linear-gradient(#f5f5f5, #dedede);
  white-space: nowrap;
}
.combo .dd { margin-left: auto; }
.combo.in18 { padding-left: 17px; }
.combo.in8 { padding-left: 7px; }
.combo.in4 { padding-left: 3px; }
.combo.ruled { padding-left: 3px; }
.combo.layer { padding-left: 1px; }
.combo.layer .ico { margin-right: 1px; }
.swatch { width: 10px; height: 10px; border: 1px solid #000; background: #fff; margin: 0 5px 0 1px; }
.swatch.red { background: #f00; margin: 0 3px 0 0; }
.song { font-family: "Liberation Serif", "Noto Sans CJK SC", serif; font-size: 12.5px; }
.rule { width: 36px; height: 1px; background: #000; margin-right: 3px; }
.rule.long { width: 60px; margin-right: 4px; }

/* ===== work area ===== */
.work { height: 541px; flex: none; display: flex; }
.side {
  width: 25px;
  padding-right: 1px;
  border: 1px solid #383838;
  background: #616161;
  display: flex;
  flex-direction: column;
  align-items: center;
  gap: 6px;
}
.side.left { margin-right: 4px; height: 448px; }
.side .ico { flex: none; }
.hgrip {
  width: 14px;
  height: 4px;
  margin: 3px 0 -2px;
  background: repeating-conic-gradient(#2d2d2d 0 25%, #7c7c7c 0 50%) 0 0 / 3px 3px;
  flex: none;
}
.view { width: 1305px; height: 539px; display: grid; grid-template: 522px 17px / 1288px 17px; background: #f0f0f0; }
.rightcol { width: 25px; margin-left: 4px; height: 539px; overflow: hidden; }
.modify { height: 406px; margin-bottom: 1px; }
.order { height: 160px; }
.order .hgrip { margin-top: 2px; }
.hsep { width: 19px; height: 2px; background: #eee; margin: -1px 0 -3px; flex: none; }

.canvas { position: relative; background: #000; overflow: hidden; }
.vplabel {
  position: absolute;
  left: 3px;
  top: 6px;
  color: #d5d5d5;
  font: 12px/18px "Liberation Serif", "Noto Sans CJK SC", serif;
  letter-spacing: .15px;
}
.ucs { position: absolute; left: 0; top: 430px; width: 110px; height: 92px; }
.mesh {
  position: absolute;
  left: 171px;
  top: 125px;
  width: 184px;
  height: 24px;
  display: grid;
  grid-template-columns: 7px 22px 23px 23px 23px 23px 9px 19px 27px 6px;
  align-items: center;
  justify-items: center;
  background: #5f5f5f;
  border: 1px solid #333;
}
.mesh .x { width: 6px; height: 7px; align-self: start; margin-top: 3px; }

.cube .ring { position: absolute; left: 1182px; top: 17px; width: 88px; height: 89px; border: 10px solid #292929; border-radius: 50%; }
.cube > span { position: absolute; color: #a2a2a2; font: 14px/16px "Noto Sans CJK SC", sans-serif; }
.cube .n { left: 1219px; top: 11px; }
.cube .s { left: 1219px; top: 95px; }
.cube .w { left: 1177px; top: 53px; }
.cube .e { left: 1260px; top: 53px; }
.face {
  position: absolute;
  left: 1207px;
  top: 42px;
  width: 38px;
  height: 38px;
  background: #a2a2a2;
  border: 1px solid #bbb;
  display: grid;
  place-items: center;
}
.face span { width: 24px; height: 25px; background: #93969b; color: #34373d; font: 24px/22px "Noto Sans CJK SC", sans-serif; }
.wcs {
  position: absolute;
  left: 1202px;
  top: 126px;
  width: 48px;
  height: 17px;
  display: flex;
  align-items: center;
  gap: 5px;
  padding: 0 0 2px 4px;
  background: #85858f;
  border: 1px solid #aaa;
  border-radius: 3px;
  color: #484848;
  font: 11px "Liberation Sans", sans-serif;
}
.wcs svg { width: 10px; height: 8px; }

.meter { position: absolute; left: 1021px; top: 123px; }
.speeds {
  position: absolute;
  left: 34px;
  top: 9px;
  width: 84px;
  height: 41px;
  padding-left: 28px;
  border-radius: 0 21px 21px 0;
  background: #1b1f28;
}
.speeds p { display: flex; align-items: center; height: 20.5px; padding-right: 8px; color: #888c93; font-size: 10px; }
.speeds p + p { border-top: 1px solid #252a34; }
.speeds b { margin-left: auto; color: #fff; font-size: 11px; font-weight: 400; }
.speeds svg { width: 7px; height: 8px; }
.dial {
  position: absolute;
  left: 0;
  top: 0;
  width: 58px;
  height: 58px;
  border: 1px solid #393d49;
  border-radius: 50%;
  background: linear-gradient(#2e3240, #282b37);
  color: #e4e4e4;
}
.dial svg { position: absolute; left: 0; top: 0; width: 56px; height: 56px; }
.dial span { display: block; padding: 10px 0 0 11px; font: 300 25px/36px Roboto, sans-serif; white-space: nowrap; }
.dial small { font-size: 10px; color: #fff; font-weight: 400; }

.vscroll { display: flex; flex-direction: column; align-items: center; background: #eee; }
.vscroll i, .hscroll i { flex: none; }
.up { margin-top: 7px; border: 3px solid transparent; border-bottom: 4px solid #333; border-top: 0; }
.down { margin-top: 12px; border: 3px solid transparent; border-top: 4px solid #333; border-bottom: 0; }
.thumb { width: 15px; height: 15px; border: 1px solid #888; border-radius: 2px; background: linear-gradient(135deg, #fff, #c9c9cf); }
.vscroll .thumb { margin-top: 473px; }
.hscroll { display: flex; align-items: center; background: #eee; }
.lt { margin-left: 6px; border: 3px solid transparent; border-right: 4px solid #333; border-left: 0; }
.rt { margin-left: 1112px; border: 3px solid transparent; border-left: 4px solid #333; border-right: 0; }
.hscroll .thumb { margin-left: 141px; }

/* ===== command line ===== */
.command { height: 57px; flex: none; display: flex; border-top: 1px solid #888; }
.cmdside {
  width: 23px;
  display: flex;
  flex-direction: column;
  align-items: center;
  background: linear-gradient(90deg, #606060, #484848);
}
.cgrip { width: 17px; height: 6px; margin-top: 4px; background: repeating-conic-gradient(#555 0 25%, #aaa 0 50%) 0 0 / 3px 3px; }
.cmdside svg { width: 12px; height: 12px; margin: 5px 1px 0 0; }
.cmdside .wrench { width: 17px; height: 17px; margin-top: 8px; }
.cmdmain { flex: 1; }
.history {
  height: 33px;
  padding: 3px 2px 0;
  background: #c8c8c8;
  font: 12px/15px "Liberation Mono", "Noto Sans CJK SC", monospace;
  letter-spacing: .15px;
}
.input {
  height: 23px;
  border-top: 1px solid #777;
  background: #fff;
  display: flex;
  align-items: center;
  padding: 0 0 1px 5px;
  color: #999;
}
.prompt { width: 16px; height: 14px; margin-right: 2px; }
.input span { margin-left: 9px; transform: skewX(-10deg); font-size: 12.5px; }

/* ===== status ===== */
.status { height: 30px; flex: none; display: flex; justify-content: space-between; background: #373737; }
.tabs { position: relative; height: 20px; color: #b4b4b4; font-size: 12px; line-height: 21px; display: flex; padding-left: 23px; }
.tabs .tabshape { position: absolute; left: 12px; top: 1px; width: 200px; height: 20px; overflow: visible; }
.tabs span { position: relative; width: 54px; }
.tabs .on { color: #fff; font-weight: bold; width: 47px; }
.tabs .plus { position: relative; width: 10px; height: 10px; margin: 5px 0 0 -1px; }
.tools { display: flex; height: 28px; gap: 1px; padding-top: 2px; background: #373737; }
.cell {
  display: grid;
  align-items: center;
  justify-items: center;
  background: #505050;
  border: 1px solid #707070;
  color: #fff;
}
.cell svg { width: 16px; height: 16px; }
.cell .dd { border-width: 5px 3.5px 0; }
.glow { filter: drop-shadow(0 0 2px #0a5db8); }
.c-model { width: 28px; font-weight: bold; font-size: 12px; white-space: nowrap; }
.c-grid { width: 66px; grid-template-columns: 26px 20px 20px; }
.c-ortho { width: 128px; grid-template-columns: 24px 25px 24px 14px 25px 14px; }
.c-snap { width: 65px; grid-template-columns: 23px 26px 14px; }
.c-anno { width: 153px; grid-template-columns: 24px 25px 22px 67px 11px; white-space: nowrap; }
.c-gear { width: 40px; grid-template-columns: 24px 14px; }
.c-iso { width: 26px; }
.c-plus, .c-perf { width: 25px; }
.c-trust { width: 24px; }
.c-full { width: 51px; grid-template-columns: 25px 24px; }

/* ===== taskbar ===== */
.taskbar {
  height: 8px;
  flex: none;
  display: flex;
  gap: 7px;
  overflow: hidden;
  background: linear-gradient(90deg, #3d2c23, #5b4838 70%, #80654e 80%, #50402f);
  border-top: 1px solid #1f1a17;
}
.start { width: 32px; height: 30px; margin: 1px 11px 0 10px; border-radius: 50%; background: #8fb1c5; }
.task { width: 112px; height: 20px; margin-top: 1px; border: 1px solid #ddd0c5; border-radius: 2px; background: linear-gradient(90deg, #958b83, #ada49b 50%, #71655d); flex: none; }
.gap { width: 52px; background: radial-gradient(circle at 28px 12px, #eee 9px, transparent 10px); }
.task.pink { background: linear-gradient(90deg, #f3d4d4, #c26c6c); }
.task.blue { background: linear-gradient(90deg, #6b9eb3 15%, #b0aba5 40%); }
.task.qq { background: radial-gradient(circle at 26px 10px, #000 8px, transparent 9px), linear-gradient(90deg, #958b83, #ada49b 50%, #71655d); }
.task.win { background: linear-gradient(90deg, #c0b6ac 15%, #17b3ea 15% 35%, #a89c91 35%); }
.clock { margin-left: auto; color: #fff; font: 12px/20px "Noto Sans", sans-serif; margin-top: 1px; }
.peek { width: 14px; margin-left: 11px; border: 1px solid #a19b95; background: #69625d; }

/* ===== markup ===== */
.markup { position: absolute; left: 0; top: 0; width: 1366px; height: 736px; }
```
